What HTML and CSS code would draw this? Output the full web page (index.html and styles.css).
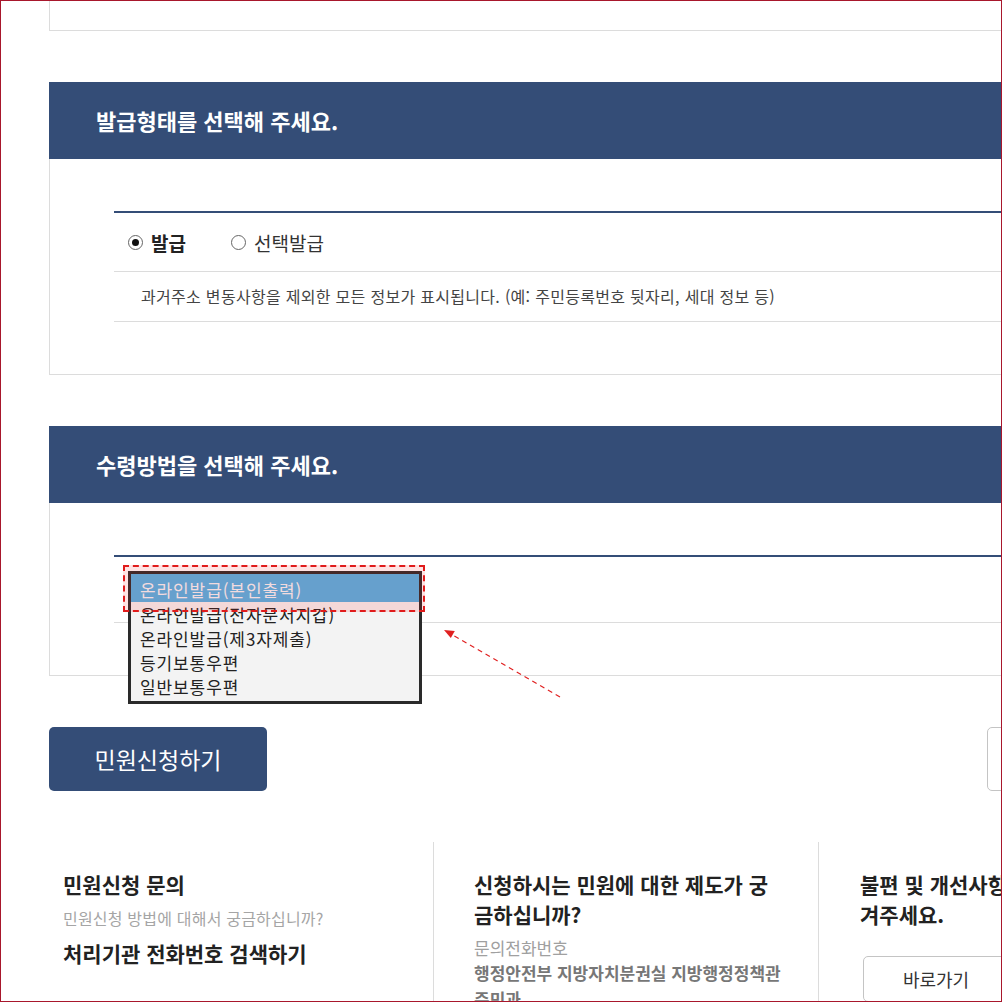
FILE: index.html
```html
<!DOCTYPE html>
<html lang="ko">
<head>
    <meta charset="UTF-8">
    <meta name="viewport" content="width=device-width, initial-scale=1.0">
    <title>민원신청</title>
    <link rel="stylesheet" href="styles.css">
</head>
<body>
    <div class="frame">
        <div class="page">
            <div class="box-prev"></div>

            <section class="step">
                <h2 class="step-title">발급형태를 선택해 주세요.</h2>
                <div class="step-body">
                    <div class="opt-table">
                        <div class="opt-row radios">
                            <label class="radio checked"><span class="circle"></span>발급</label>
                            <label class="radio"><span class="circle"></span>선택발급</label>
                        </div>
                        <div class="opt-row desc">
                            과거주소 변동사항을 제외한 모든 정보가 표시됩니다. (예: 주민등록번호 뒷자리, 세대 정보 등)
                        </div>
                    </div>
                </div>
            </section>

            <section class="step">
                <h2 class="step-title">수령방법을 선택해 주세요.</h2>
                <div class="step-body">
                    <div class="opt-table">
                        <div class="opt-row select-row">
                            <ul class="select-list">
                                <li class="selected">온라인발급(본인출력)</li>
                                <li>온라인발급(전자문서지갑)</li>
                                <li>온라인발급(제3자제출)</li>
                                <li>등기보통우편</li>
                                <li>일반보통우편</li>
                            </ul>
                            <div class="mark"></div>
                            <svg class="arrow" width="125" height="80" viewBox="0 0 125 80">
                                <line x1="120" y1="73" x2="11" y2="10" stroke="#e02020" stroke-width="1.2" stroke-dasharray="5 4"/>
                                <polygon points="4,6 14.8,7 10.8,14" fill="#e02020"/>
                            </svg>
                        </div>
                    </div>
                </div>
            </section>

            <div class="actions">
                <button class="btn-primary">민원신청하기</button>
                <button class="btn-line" aria-label="취소"></button>
            </div>

            <div class="guide">
                <div class="guide-col first">
                    <h3>민원신청 문의</h3>
                    <p class="sub">민원신청 방법에 대해서 궁금하십니까?</p>
                    <p class="link">처리기관 전화번호 검색하기</p>
                </div>
                <div class="guide-col">
                    <h3 class="wrap">신청하시는 민원에 대한 제도가 궁금하십니까?</h3>
                    <p class="label">문의전화번호</p>
                    <p class="org">행정안전부 지방자치분권실 지방행정정책관 주민과</p>
                </div>
                <div class="guide-col last">
                    <h3 class="wrap wide">불편 및 개선사항을 국민신문고에 남겨주세요.</h3>
                    <button class="btn-go">바로가기</button>
                </div>
            </div>
        </div>
    </div>
</body>
</html>
```

FILE: styles.css
```css
body {
    margin: 0;
    font-family: "Noto Sans CJK KR", "Noto Sans", sans-serif;
    color: #222;
    background-color: #ffffff;
}

.frame {
    width: 1002px;
    height: 1002px;
    box-sizing: border-box;
    border: 1px solid #a8172c;
    overflow: hidden;
}

.page {
    width: 1156px;
    padding-left: 48px;
}

.box-prev {
    height: 29px;
    border-left: 1px solid #dcdcdc;
    border-bottom: 1px solid #dcdcdc;
}

.step {
    margin-top: 51px;
}

.step-title {
    margin: 0;
    height: 77px;
    line-height: 77px;
    padding-left: 47px;
    background-color: #344d77;
    color: #ffffff;
    font-size: 22px;
    font-weight: 700;
}

.step-body {
    border: 1px solid #dcdcdc;
    border-top: none;
    padding: 52px 0 52px 64px;
}

.opt-table {
    border-top: 2px solid #344d77;
}

.opt-row {
    border-bottom: 1px solid #dcdcdc;
}

.radios {
    height: 58px;
    display: flex;
    align-items: center;
    padding-left: 14px;
    gap: 45px;
}

.radio {
    display: flex;
    align-items: center;
    gap: 8px;
    font-size: 19px;
    color: #333;
}

.radio.checked {
    font-weight: 700;
    color: #222;
}

.circle {
    width: 13px;
    height: 13px;
    border: 1px solid #666;
    border-radius: 50%;
    background-color: #ffffff;
    display: flex;
    align-items: center;
    justify-content: center;
}

.radio.checked .circle::after {
    content: "";
    width: 7px;
    height: 7px;
    border-radius: 50%;
    background-color: #111;
}

.desc {
    height: 49px;
    line-height: 49px;
    padding-left: 27px;
    font-size: 16px;
    color: #444;
    letter-spacing: 0.3px;
}

.select-row {
    height: 65px;
    position: relative;
}

.select-list {
    position: absolute;
    left: 14px;
    top: 14px;
    width: 288px;
    margin: 0;
    padding: 0 0 3px;
    list-style: none;
    border: 3px solid #2a2a2a;
    background-color: #f3f3f3;
    z-index: 2;
}

.select-list li {
    height: 24px;
    line-height: 25px;
    padding-left: 9px;
    font-size: 17px;
    letter-spacing: 0.9px;
    color: #222;
}

.select-list li.selected {
    height: 28px;
    line-height: 31px;
    background-color: #50b2e6;
    color: #f2f6fa;
}

.mark {
    position: absolute;
    left: 9px;
    top: 8px;
    width: 298px;
    height: 43px;
    border: 2px dashed #e01b1b;
    background-color: rgba(255, 40, 40, 0.13);
    z-index: 3;
}

.arrow {
    position: absolute;
    left: 326px;
    top: 67px;
    z-index: 3;
}

.actions {
    margin-top: 51px;
    display: flex;
    justify-content: space-between;
}

.actions button {
    width: 218px;
    height: 64px;
    border-radius: 5px;
    font-family: inherit;
    font-size: 23px;
}

.btn-primary {
    background-color: #344d77;
    color: #ffffff;
    border: none;
}

.btn-line {
    background-color: #ffffff;
    border: 1px solid #c4c4c4;
}

.guide {
    margin-top: 51px;
    display: grid;
    grid-template-columns: 384px 385px 386px;
    min-height: 200px;
}

.guide-col {
    border-left: 1px solid #dcdcdc;
    padding: 27px 0 0 40px;
}

.guide-col.first {
    border-left: none;
    padding-left: 14px;
}

.guide-col.last {
    padding-left: 41px;
}

.guide-col h3 {
    margin: 0;
    font-size: 21px;
    line-height: 30px;
    font-weight: 700;
    color: #222;
}

.guide-col h3.wrap {
    width: 298px;
}

.guide-col h3.wide {
    width: 318px;
}

.sub {
    margin: 7px 0 0;
    font-size: 16px;
    line-height: 24px;
    letter-spacing: 0.2px;
    color: #a5a5a5;
}

.link {
    margin: 7px 0 0;
    font-size: 21px;
    line-height: 32px;
    font-weight: 700;
    color: #222;
}

.label {
    margin: 6px 0 0;
    font-size: 17px;
    line-height: 25px;
    color: #a0a0a0;
}

.org {
    margin: 0;
    width: 312px;
    font-size: 17px;
    line-height: 26px;
    font-weight: 700;
    color: #777;
}

.btn-go {
    margin: 27px 0 0 3px;
    width: 146px;
    height: 46px;
    background-color: #ffffff;
    border: 1px solid #c4c4c4;
    border-radius: 5px;
    font-family: inherit;
    font-size: 18px;
    color: #333;
}
```
